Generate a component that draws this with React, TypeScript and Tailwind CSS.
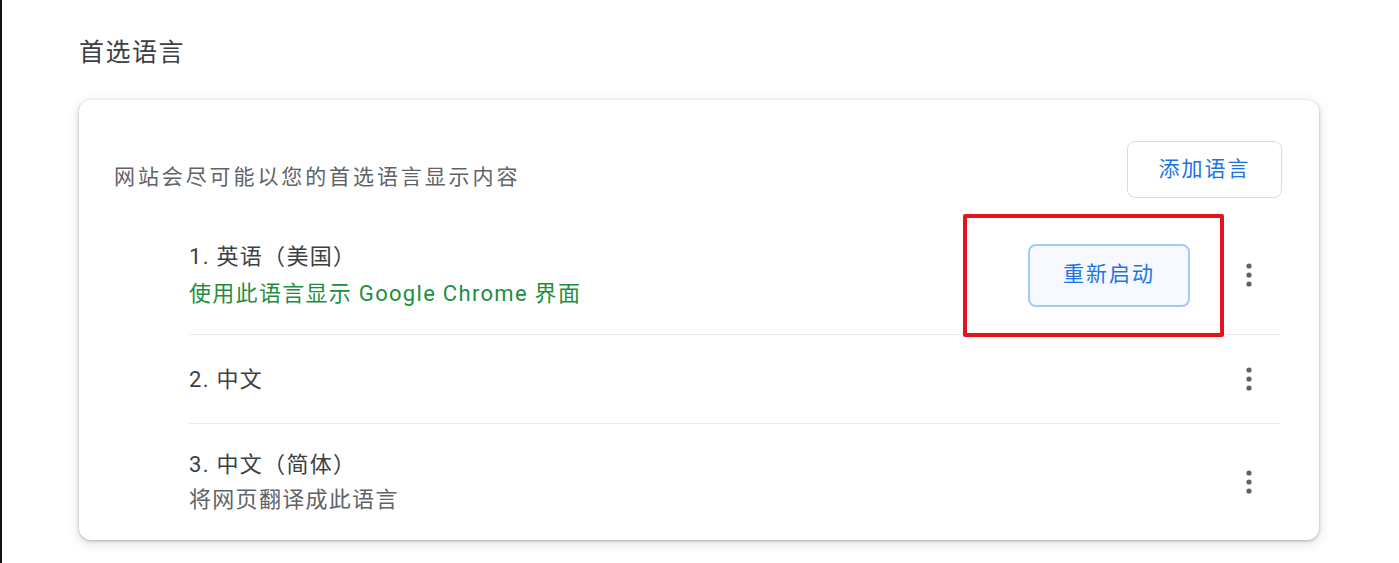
import React from "react";

const font = "font-['Roboto','Noto_Sans_CJK_SC',sans-serif]";

const Dots = () => (
  <button type="button" className="flex h-[40px] w-[40px] items-center justify-center">
    <svg width="8" height="24" viewBox="0 0 8 24" fill="#5f6368">
      <circle cx="4" cy="3" r="2.6" />
      <circle cx="4" cy="12" r="2.6" />
      <circle cx="4" cy="21" r="2.6" />
    </svg>
  </button>
);

export default function App() {
  return (
    <div className={`${font} relative h-[563px] w-[1399px] overflow-hidden border-l-2 border-[#111] bg-white pl-[77px]`}>
      <h2 className="pt-[37px] text-[25px] leading-[32px] tracking-[1.5px] text-[#3c4043]">首选语言</h2>

      <div className="mt-[31px] h-[440px] w-[1240px] rounded-[12px] bg-white shadow-[0_1px_3px_rgba(60,64,67,0.35),0_3px_10px_2px_rgba(60,64,67,0.12)]">
        <div className="flex items-start justify-between pl-[35px] pr-[37px] pt-[41px]">
          <p className="mt-[22px] text-[21px] leading-[28px] tracking-[2.9px] text-[#5f6368]">
            网站会尽可能以您的首选语言显示内容
          </p>
          <button
            type="button"
            className="h-[57px] w-[155px] rounded-[8px] border-[1.5px] border-[#dadce0] bg-white text-[21px] tracking-[2px] text-[#1a73e8]"
          >
            添加语言
          </button>
        </div>

        <div className="ml-[110px] mr-[38px] mt-[18px]">
          <div className="flex h-[118px] items-center justify-between">
            <div className="text-[22px] leading-[37px] tracking-[1.3px]">
              <div className="text-[#3c4043]">1. 英语（美国）</div>
              <div className="text-[#1e8e3e]">使用此语言显示 Google Chrome 界面</div>
            </div>
            <div className="flex items-center gap-[39px] pr-[12px]">
              <button
                type="button"
                className="h-[63px] w-[162px] rounded-[8px] border-2 border-[#a8c7fa] bg-[#f6f9ff] text-[21px] tracking-[2px] text-[#1a73e8]"
              >
                重新启动
              </button>
              <Dots />
            </div>
          </div>
          <div className="h-px bg-[#ebebeb]" />
          <div className="flex h-[88px] items-center justify-between pr-[12px]">
            <div className="text-[22px] leading-[37px] tracking-[1.3px] text-[#3c4043]">2. 中文</div>
            <Dots />
          </div>
          <div className="h-px bg-[#ebebeb]" />
          <div className="flex h-[116px] items-center justify-between pr-[12px]">
            <div className="text-[22px] leading-[35px] tracking-[1.3px]">
              <div className="text-[#3c4043]">3. 中文（简体）</div>
              <div className="text-[#5f6368]">将网页翻译成此语言</div>
            </div>
            <Dots />
          </div>
        </div>
      </div>

      <div className="pointer-events-none absolute left-[961px] top-[214px] h-[123px] w-[261px] rounded-[2px] border-[4px] border-[#e5141c]" />
    </div>
  );
}
